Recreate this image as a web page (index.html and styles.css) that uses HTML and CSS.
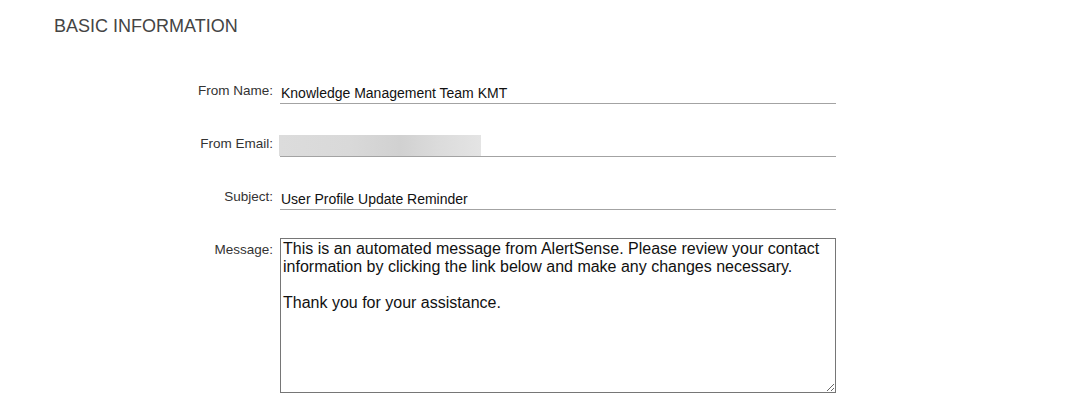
FILE: index.html
```html
<!DOCTYPE html>
<html lang="en">
<head>
<meta charset="utf-8">
<title>Basic Information</title>
<link rel="stylesheet" href="styles.css">
</head>
<body>
<section class="panel">
  <h2 class="panel-title">BASIC INFORMATION</h2>
  <form class="form">
    <div class="row row-name">
      <label class="label" for="fromName">From Name:</label>
      <input class="field" id="fromName" type="text" value="Knowledge Management Team KMT">
    </div>
    <div class="row row-email">
      <label class="label" for="fromEmail">From Email:</label>
      <div class="field field-redacted" id="fromEmail"><span class="redaction"></span></div>
    </div>
    <div class="row row-subject">
      <label class="label" for="subject">Subject:</label>
      <input class="field" id="subject" type="text" value="User Profile Update Reminder">
    </div>
    <div class="row row-message">
      <label class="label label-message" for="message">Message:</label>
      <textarea class="message" id="message">This is an automated message from AlertSense. Please review your contact information by clicking the link below and make any changes necessary.

Thank you for your assistance.</textarea>
    </div>
  </form>
</section>
</body>
</html>
```

FILE: styles.css
```css
html, body {
  margin: 0;
  padding: 0;
  background: #ffffff;
}

body {
  font-family: "Liberation Sans", Arial, sans-serif;
  color: #333333;
}

.panel {
  padding: 16px 0 0 54px;
}

.panel-title {
  margin: 0;
  font-size: 18px;
  line-height: 21px;
  font-weight: normal;
  color: #444444;
}

.form {
  margin-top: 45px;
  margin-left: -54px;
  display: flex;
  flex-direction: column;
}

.row {
  display: flex;
  align-items: flex-start;
  gap: 7px;
}

.row-name,
.row-email {
  margin-bottom: 31px;
}

.row-subject {
  margin-bottom: 28px;
}

.label {
  width: 273px;
  text-align: right;
  font-size: 13.5px;
  line-height: 15px;
  padding-top: 1px;
  color: #333333;
}

.label-message {
  padding-top: 4px;
}

.field {
  box-sizing: border-box;
  width: 556px;
  height: 22px;
  margin: 0;
  padding: 0 0 0 1px;
  border: none;
  border-bottom: 1px solid #a3a3a3;
  outline: none;
  background: transparent;
  font-family: "Liberation Sans", Arial, sans-serif;
  font-size: 14px;
  color: #111111;
}

.field-redacted {
  padding: 0;
}

.redaction {
  display: block;
  width: 202px;
  height: 21px;
  margin-left: -1px;
  background: linear-gradient(90deg, #dcdcdc 0%, #d9d9d9 35%, #d1d1d1 60%, #dcdcdc 80%, #e4e4e4 100%);
}

.message {
  box-sizing: border-box;
  width: 556px;
  height: 155px;
  margin: 0;
  padding: 1px 2px 2px 2px;
  border: 1px solid #767676;
  border-radius: 0;
  font-family: "Liberation Sans", Arial, sans-serif;
  font-size: 16px;
  line-height: normal;
  color: #111111;
  background: #ffffff;
  resize: both;
}
```
